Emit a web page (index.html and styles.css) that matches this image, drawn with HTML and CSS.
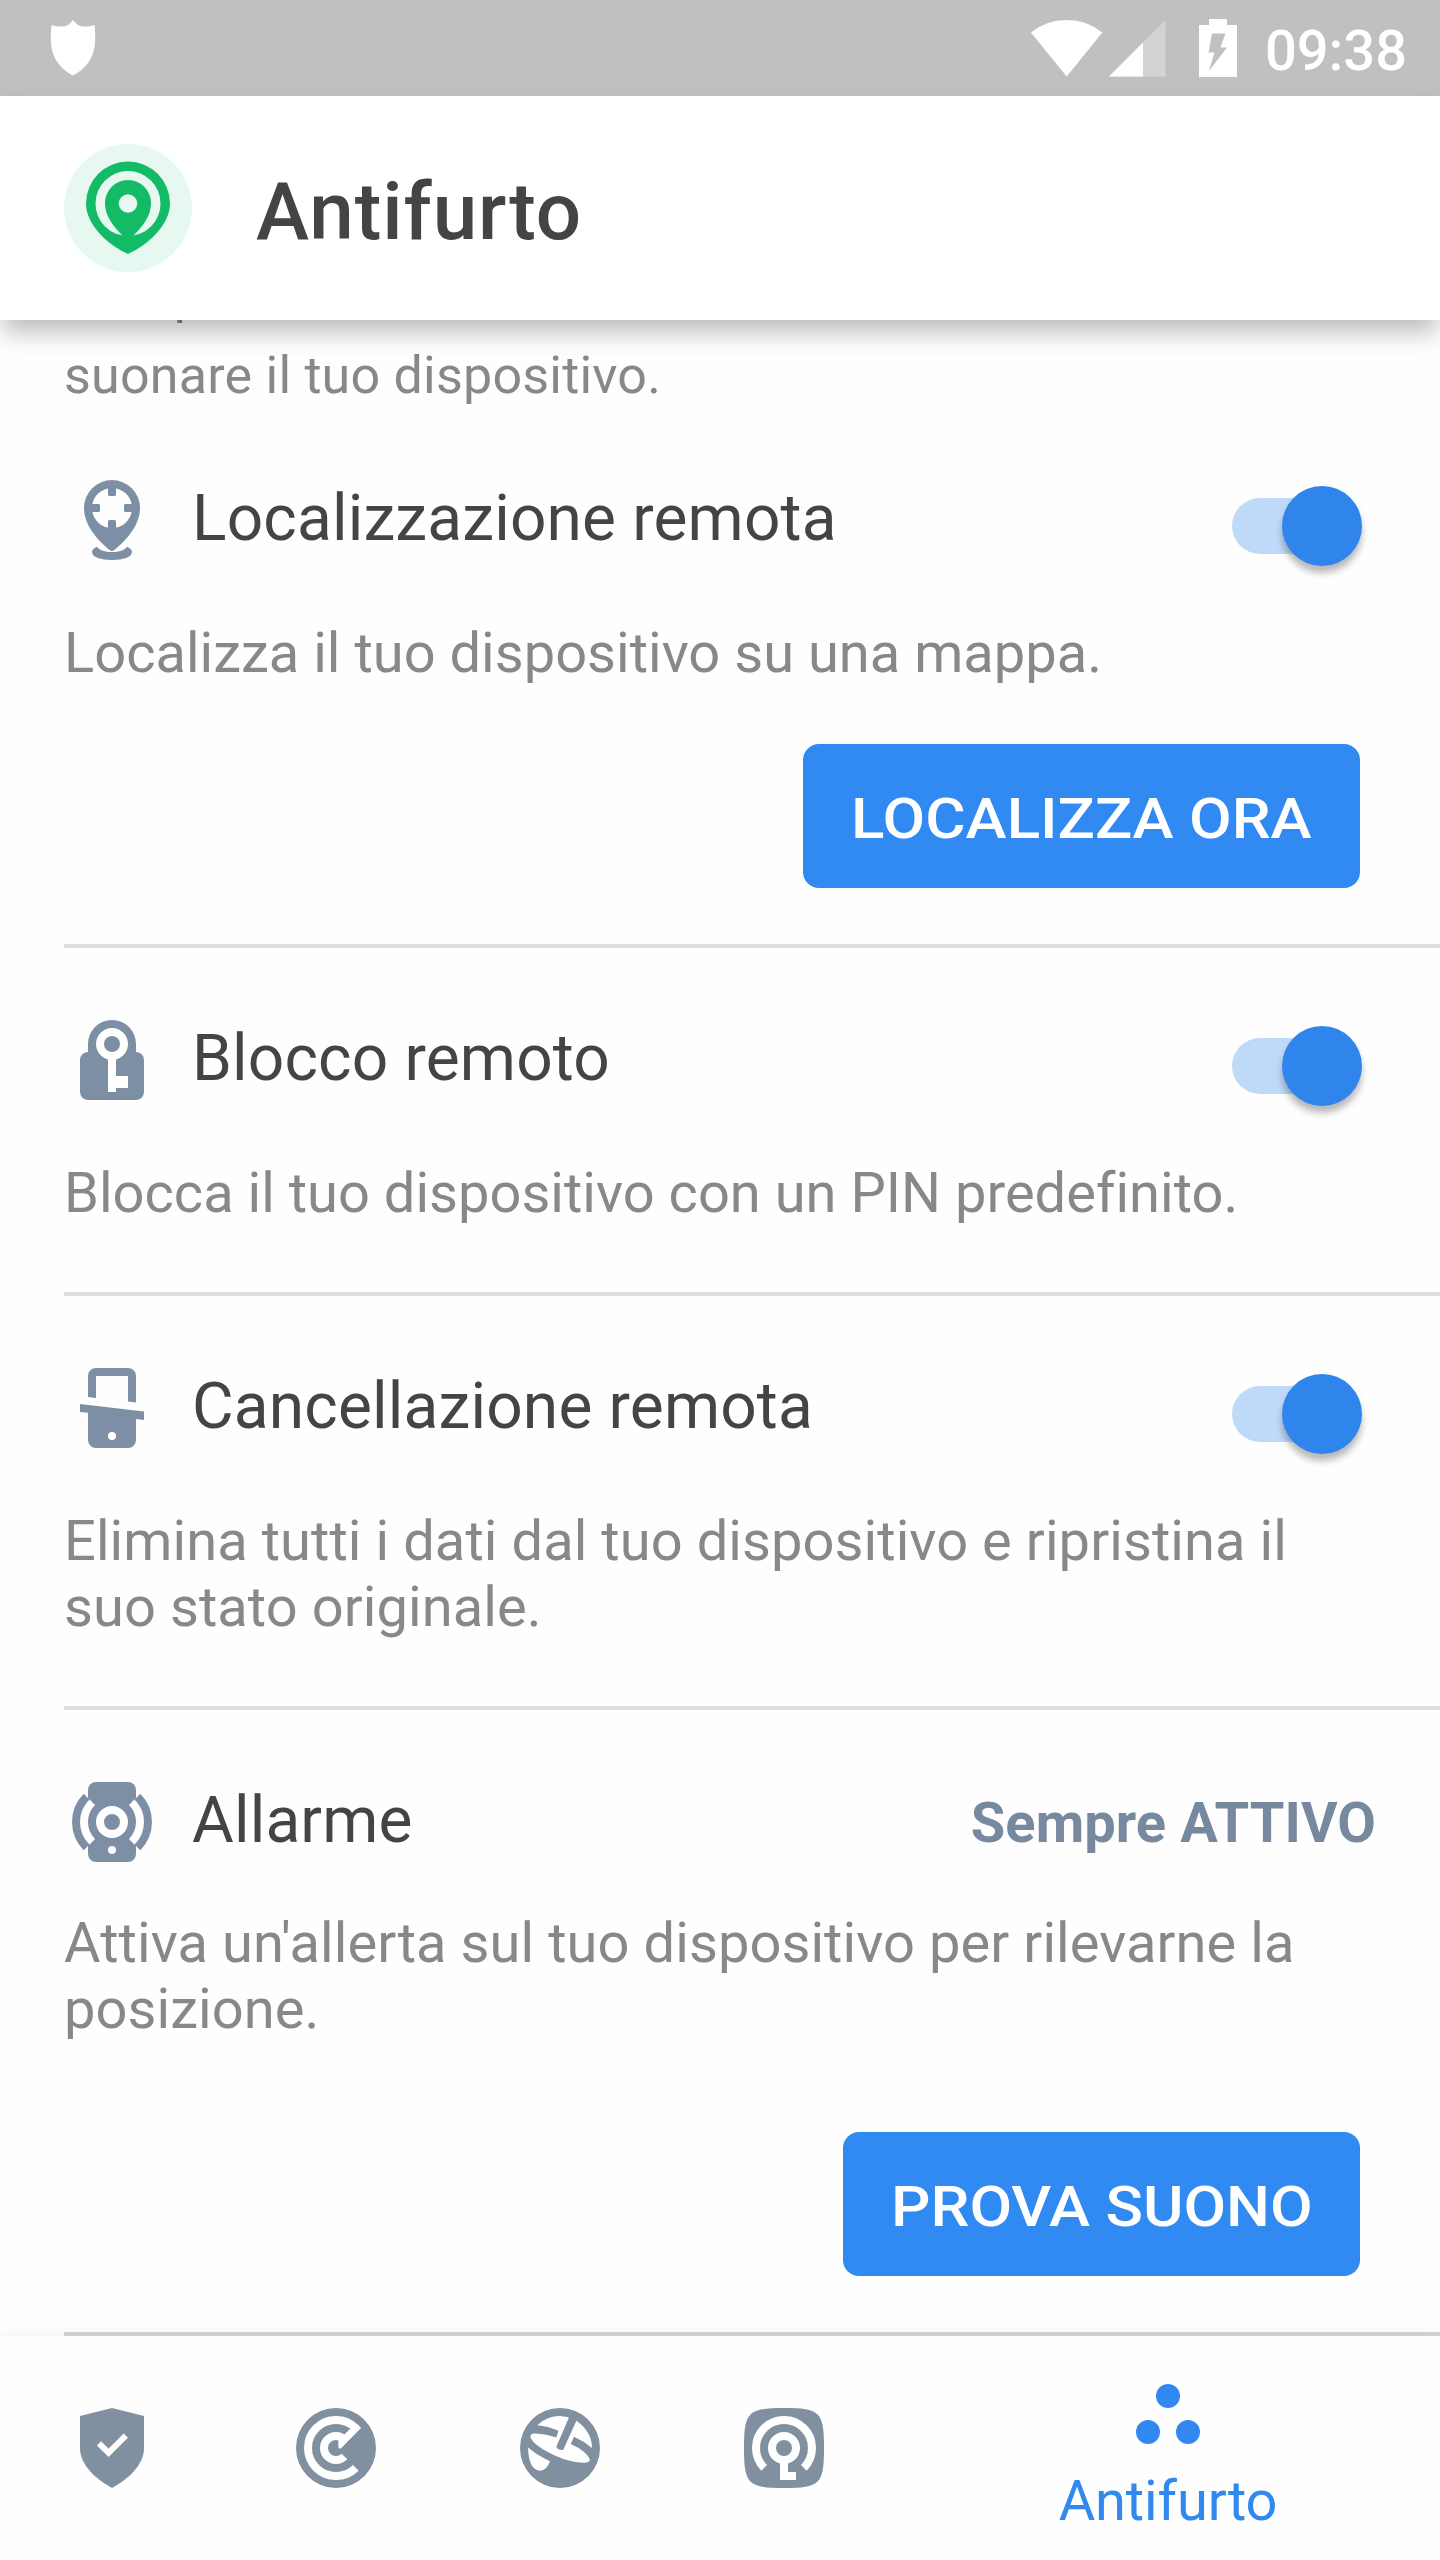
FILE: index.html
```html
<!DOCTYPE html>
<html lang="it">
<head>
<meta charset="utf-8">
<title>Antifurto</title>
<link rel="stylesheet" href="styles.css">
</head>
<body>
<div class="screen">
  <div class="status-bar">
    <svg class="status-shield" width="46" height="56" viewBox="0 0 46 56"><path d="M23 0C26 4 29 6.500 34 6.500C38 6.500 41 6 44.500 5C46.500 24 46 43 23 55.500C0 43-.5 24 1.500 5C5 6 8 6.500 12 6.500C17 6.500 20 4 23 0z" fill="#fff"/></svg>
    <div class="status-right">
      <svg width="72" height="57" viewBox="0 0 72 57"><path d="M0 12.500Q15 0 35.700 0Q56 0 71.300 12.500L35.700 56.500z" fill="#fff"/></svg>
      <svg class="status-signal" width="57" height="57" viewBox="0 0 57 57"><path d="M0 56.500L56.500 0V56.500z" fill="#d3d3d3"/><path d="M0 56.500L34 22.500V56.500z" fill="#fff"/></svg>
      <svg class="status-battery" width="38" height="58" viewBox="0 0 38 58"><path d="M10 0H28V6H38V58H0V6H10z" fill="#fff"/><path d="M13 14.500H26.500L21.500 28.500H28L10 52L15.500 33.500H9.500z" fill="#c0c0c0"/></svg>
      <span class="clock">09:38</span>
    </div>
  </div>

  <header class="app-bar">
    <svg class="app-logo" viewBox="0 0 128 128">
      <circle cx="64" cy="64" r="64" fill="#e7f8f1"/>
      <path d="M64 17.500a42 42 0 0 0-42 42C22 82 46 102 64 110C82 102 106 82 106 59.500a42 42 0 0 0-42-42z" fill="#13bb67"/>
      <circle cx="64" cy="59.500" r="32.500" fill="#e7f8f1"/>
      <path d="M64 36a23 23 0 0 0-23 23C41 72 49 82 58.500 91.500L57 95H71L69.500 91.500C79 82 87 72 87 59a23 23 0 0 0-23-23z" fill="#13bb67"/>
      <circle cx="64" cy="59.500" r="9.300" fill="#e7f8f1"/>
    </svg>
    <h1 class="app-title">Antifurto</h1>
  </header>

  <main class="content">
    <p class="intro">Completa il controllo remoto e fai<br>suonare il tuo dispositivo.</p>

    <section class="feature">
      <div class="feature-head">
        <svg class="icon" viewBox="0 0 24 24"><path fill-rule="evenodd" d="M12 2a7 7 0 0 0-7 7c0 4.700 4 8.500 6.400 10.500q.6.500 1.200 0C15 17.500 19 13.700 19 9a7 7 0 0 0-7-7zM11 4.100V5.600q0 .4.400.4h1.200q.4 0 .4-.4V4.100A5 5 0 0 1 16.900 8H15.400q-.4 0-.4.400v1.200q0 .4.400.4h1.500A5 5 0 0 1 13 13.900V12.400q0-.4-.4-.4h-1.200q-.4 0-.4.400v1.500A5 5 0 0 1 7.100 10H8.600q.4 0 .4-.4V8.400q0-.4-.4-.4H7.100A5 5 0 0 1 11 4.100z"/><path d="M8.200 18.700Q7 19.300 7 20c0 1.300 2.200 2 5 2s5-.7 5-2q0-.7-1.200-1.300c-.7.9-2 1.300-3.800 1.300s-3.100-.4-3.800-1.300z"/></svg>
        <h2 class="feature-title">Localizzazione remota</h2>
        <span class="switch"><span class="thumb"></span></span>
      </div>
      <p class="desc desc-tight">Localizza il tuo dispositivo su una mappa.</p>
      <button class="btn btn-locate"><span class="btn-label">LOCALIZZA ORA</span></button>
    </section>

    <section class="feature feature-plain">
      <div class="feature-head">
        <svg class="icon" viewBox="0 0 24 24"><path d="M6 10V8a6 6 0 0 1 12 0v2a2 2 0 0 1 2 2v8a2 2 0 0 1-2 2H6a2 2 0 0 1-2-2v-8a2 2 0 0 1 2-2z"/><circle cx="12" cy="8" r="3" fill="none" stroke="#fff" stroke-width="2"/><path class="cut" d="M11 11.500h2V16h3v3h-3v1h-2z"/></svg>
        <h2 class="feature-title">Blocco remoto</h2>
        <span class="switch"><span class="thumb"></span></span>
      </div>
      <p class="desc desc-tight">Blocca il tuo dispositivo con un PIN predefinito.</p>
    </section>

    <section class="feature feature-plain">
      <div class="feature-head">
        <svg class="icon" viewBox="0 0 24 24"><path d="M6 9.250V4a2 2 0 0 1 2-2h8a2 2 0 0 1 2 2v6.650l-2-.25V4H8v5.500z"/><path d="M4 11l16 1.850V15l-2-.25V20a2 2 0 0 1-2 2H8a2 2 0 0 1-2-2V13.200L4 13z"/><circle class="cut" cx="12" cy="19" r="1"/></svg>
        <h2 class="feature-title">Cancellazione remota</h2>
        <span class="switch"><span class="thumb"></span></span>
      </div>
      <p class="desc">Elimina tutti i dati dal tuo dispositivo e ripristina il suo stato originale.</p>
    </section>

    <section class="feature feature-alarm">
      <div class="feature-head">
        <svg class="icon" viewBox="0 0 24 24"><rect x="6" y="2" width="12" height="20" rx="2"/><g fill="none" stroke-width="2"><path stroke="#fff" d="M7.050 7.050a7 7 0 0 0 0 9.900M16.950 7.050a7 7 0 0 1 0 9.900"/><path stroke="#7d8fa4" d="M5.640 5.640a9 9 0 0 0 0 12.720M18.360 5.640a9 9 0 0 1 0 12.720"/><circle cx="12" cy="12" r="3" stroke="#fff"/></g><circle class="cut" cx="12" cy="19" r="1"/></svg>
        <h2 class="feature-title">Allarme</h2>
        <span class="always-on">Sempre ATTIVO</span>
      </div>
      <p class="desc">Attiva un'allerta sul tuo dispositivo per rilevarne la posizione.</p>
      <button class="btn"><span class="btn-label">PROVA SUONO</span></button>
    </section>
  </main>

  <nav class="tabs">
    <a class="tab"><svg class="icon" viewBox="0 0 24 24"><path d="M12 2l8 2v8c0 4-3.500 7.500-8 10c-4.500-2.500-8-6-8-10V4z"/><path d="M8.750 10.850l2.400 2.350 4.300-4.300" fill="none" stroke="#fff" stroke-width="1.500"/></svg></a>
    <a class="tab"><svg class="icon" viewBox="0 0 24 24"><circle cx="12" cy="12" r="10"/><g fill="none" stroke="#fff" stroke-width="2"><path d="M16.950 16.950A7 7 0 1 1 16.950 7.050"/><path d="M14.120 14.120A3 3 0 1 1 14.120 9.880"/></g><path class="cut" d="M17.600 6.300L18.300 6.950L13.200 12.100Q12.600 12.300 12.600 11.600V9.500L14.250 8.500L15.600 7.100z"/></svg></a>
    <a class="tab"><svg class="icon" viewBox="0 0 24 24"><circle cx="12" cy="12" r="10"/><path class="cut" d="M6.300 6.300Q8.800 4 12 4L14.250 4.300L11.100 11.700Q11.500 12.600 12.800 12.500L16.100 5.200Q20 8 20 12Q18 10.300 15.500 9.200L14.700 11Q18.600 12.800 19.400 14.700Q19.600 15.500 18.600 15.650Q15 15.800 11 14Q5.500 11.500 4.600 9.300Q4.600 8.500 5.400 8.400Q8 8.400 11.100 9.400L11.600 7.700Q9 6.500 6.300 6.300zM4 11.900Q6.500 14 9.500 15.300Q8.700 17.600 7 17.700Q4.200 17.600 4 11.900z"/></svg></a>
    <a class="tab"><svg class="icon" viewBox="0 0 24 24"><path d="M12 2C21 2 22 3 22 12S21 22 12 22 2 21 2 12 3 2 12 2z"/><g fill="none" stroke="#fff" stroke-width="2"><path d="M7.050 16.950A7 7 0 1 1 16.950 16.950"/><circle cx="12" cy="12" r="3"/></g><path class="cut" d="M11 15.500h2V18h2v2h-4z"/></svg></a>
    <a class="tab tab-active"><svg width="64" height="48" viewBox="0 0 64 48"><circle cx="32" cy="12" r="12"/><circle cx="12" cy="48" r="12"/><circle cx="52" cy="48" r="12"/></svg><span>Antifurto</span></a>
  </nav>
</div>
</body>
</html>
```
FILE: styles.css
```css
* { box-sizing: border-box; margin: 0; padding: 0; }

body {
  font-family: Roboto, "Liberation Sans", sans-serif;
  background: #fefefe;
  color: #444;
}

.screen {
  width: 1440px;
  height: 2560px;
  display: flex;
  flex-direction: column;
  overflow: hidden;
}

svg { display: block; flex: none; }

.status-bar {
  flex: none;
  height: 96px;
  padding: 0 33px 0 50px;
  display: flex;
  justify-content: space-between;
  align-items: center;
  background: #c0c0c0;
}

.status-right { display: flex; align-items: center; }
.status-signal { margin-left: 6px; }
.status-battery { margin-left: 33px; }

.clock {
  margin-left: 28px;
  font-size: 56px;
  font-weight: 500;
  line-height: 66px;
  color: #fff;
  padding-top: 5px;
}

.app-bar {
  flex: none;
  position: relative;
  z-index: 1;
  height: 224px;
  padding: 0 64px;
  display: flex;
  align-items: center;
  gap: 64px;
  background: #fff;
  box-shadow: 0 14px 24px -3px rgba(0, 0, 0, .28);
}

.app-logo { width: 128px; height: 128px; }

.app-title {
  font-size: 80px;
  font-weight: 500;
  line-height: 94px;
  letter-spacing: .9px;
  padding-top: 8px;
}

.content {
  flex: 1;
  min-height: 0;
  display: flex;
  flex-direction: column;
  padding-left: 64px;
}

.intro {
  font-size: 52px;
  line-height: 81px;
  letter-spacing: .22px;
  color: #888;
  margin-top: -66px;
}

.feature {
  display: flex;
  flex-direction: column;
  padding: 64px 0 56px;
  border-bottom: 4px solid #dedede;
}

.intro + .feature { padding-top: 56px; }
.feature-plain { padding-bottom: 66px; }

.feature-head {
  height: 96px;
  margin-bottom: 52px;
  display: flex;
  align-items: flex-start;
}

.icon { width: 96px; height: 96px; fill: #7d8fa4; }
.cut { fill: #fff; }

.feature-title {
  flex: 1;
  margin-left: 32px;
  font-size: 64px;
  font-weight: 400;
  line-height: 94px;
  letter-spacing: .17px;
}

.switch {
  width: 124px;
  height: 56px;
  margin: 26px 84px 0 0;
  display: flex;
  justify-content: flex-end;
  align-items: center;
  border-radius: 28px;
  background: #bfdaf8;
}

.thumb {
  width: 80px;
  height: 80px;
  flex: none;
  margin-right: -6px;
  border-radius: 50%;
  background: #2f85ec;
  box-shadow: 0 7px 7px rgba(0, 0, 0, .28);
}

.desc {
  padding-right: 64px;
  font-size: 56px;
  line-height: 66px;
  letter-spacing: .08px;
  color: #888;
}

.desc-tight { letter-spacing: .02px; }

.btn {
  align-self: flex-end;
  height: 144px;
  margin: 58px 80px 0 0;
  padding: 6px 67.500px 0;
  border: 0;
  border-radius: 16px;
  background: #3189f2;
  color: #fff;
  font: 500 56px/66px Roboto, "Liberation Sans", sans-serif;
}

.btn-locate { padding: 6px 70px 0; }

/* Button labels are set slightly extended */
.btn-label {
  display: inline-block;
  transform: scaleX(1.105);
}

.feature-alarm .feature-head { margin-bottom: 40px; }
.feature-alarm .btn { margin-top: 90px; }
.feature-alarm { border-color: #d4d4d4; }

.always-on {
  margin-right: 64px;
  font-size: 56px;
  font-weight: 700;
  line-height: 98px;
  letter-spacing: .08px;
  color: #76899f;
}

.tabs {
  flex: none;
  position: relative;
  height: 224px;
  display: flex;
  background: #fefefe;
  box-shadow: 0 0 16px rgba(0, 0, 0, .06);
}

.tab {
  width: 224px;
  display: flex;
  align-items: center;
  justify-content: center;
}

.tabs .icon { fill: #8090a1; }

.tab-active {
  flex: 1;
  flex-direction: column;
  justify-content: flex-start;
  padding-top: 48px;
  gap: 36px;
  font-size: 56px;
  line-height: 66px;
  letter-spacing: -.12px;
  color: #3189f0;
  fill: #3189f0;
}

.tab-active svg { overflow: visible; }
```
